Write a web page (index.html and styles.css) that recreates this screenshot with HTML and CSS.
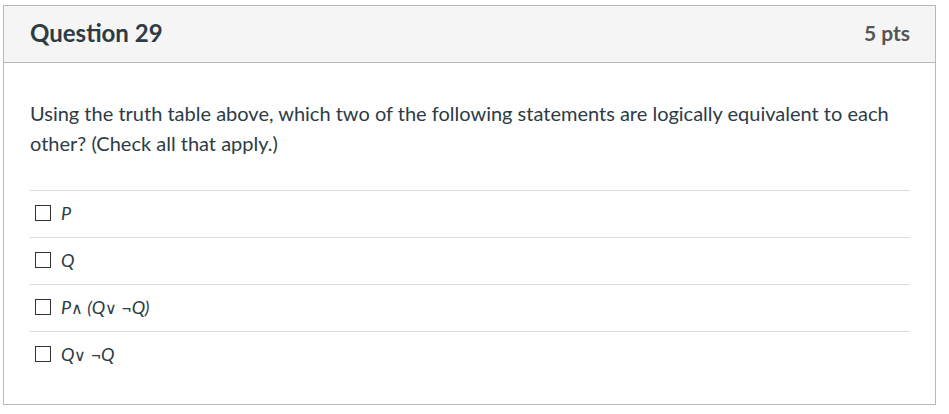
FILE: index.html
```html
<!DOCTYPE html>
<html>
<head>
<meta charset="utf-8">
<link rel="stylesheet" href="styles.css">
</head>
<body>
<div class="question">
  <div class="header">
    <h2 class="title">Question 29</h2>
    <span class="points">5 pts</span>
  </div>
  <div class="content">
    <p class="text">Using the truth table above, which two of the following statements are logically equivalent to each other? (Check all that apply.)</p>
    <ul class="answers">
      <li class="answer"><span class="box"></span><span class="label">P</span></li>
      <li class="answer"><span class="box"></span><span class="label">Q</span></li>
      <li class="answer"><span class="box"></span><span class="label">P<span class="op">∧</span> (Q<span class="op">∨</span> <span class="neg">¬</span>Q)</span></li>
      <li class="answer"><span class="box"></span><span class="label">Q<span class="op">∨</span> <span class="neg">¬</span>Q</span></li>
    </ul>
  </div>
</div>
</body>
</html>
```
FILE: styles.css
```css
html, body {
  margin: 0;
  padding: 0;
  background: #fff;
}
body {
  padding: 5px 0 0 3px;
  font-family: Lato, "Open Sans", sans-serif;
  color: #2d3b45;
}
.question {
  width: 931px;
  height: 398px;
  border: 1px solid #b8b8b8;
  box-sizing: content-box;
}
.header {
  background: #f5f5f5;
  border-bottom: 1px solid #b8b8b8;
  display: flex;
  align-items: center;
  justify-content: space-between;
  padding: 0 25px 4px 26px;
  box-sizing: border-box;
  height: 57px;
}
.title {
  margin: 0;
  font-size: 24px;
  font-weight: 700;
  color: #2d3b45;
}
.points {
  font-size: 21px;
  font-weight: 700;
  color: #555;
}
.content {
  padding: 35px 25px 0 26px;
}
.text {
  margin: 0;
  font-size: 20px;
  line-height: 30px;
  color: #2d3b45;
}
.answers {
  list-style: none;
  margin: 32px 0 0;
  padding: 0;
}
.answer {
  border-top: 1px solid #dcdcdc;
  height: 44px;
  padding-bottom: 2px;
  display: flex;
  align-items: center;
  padding-left: 5px;
}
.box {
  width: 14px;
  height: 14px;
  border: 1px solid #333;
  margin-right: 10px;
  flex: none;
}
.label {
  font-size: 18px;
  font-style: italic;
  color: #2d3b45;
}
.op {
  font-family: "DejaVu Sans", sans-serif;
  font-style: normal;
  font-weight: 200;
  font-size: 16px;
}
.neg {
  font-style: normal;
}
```
